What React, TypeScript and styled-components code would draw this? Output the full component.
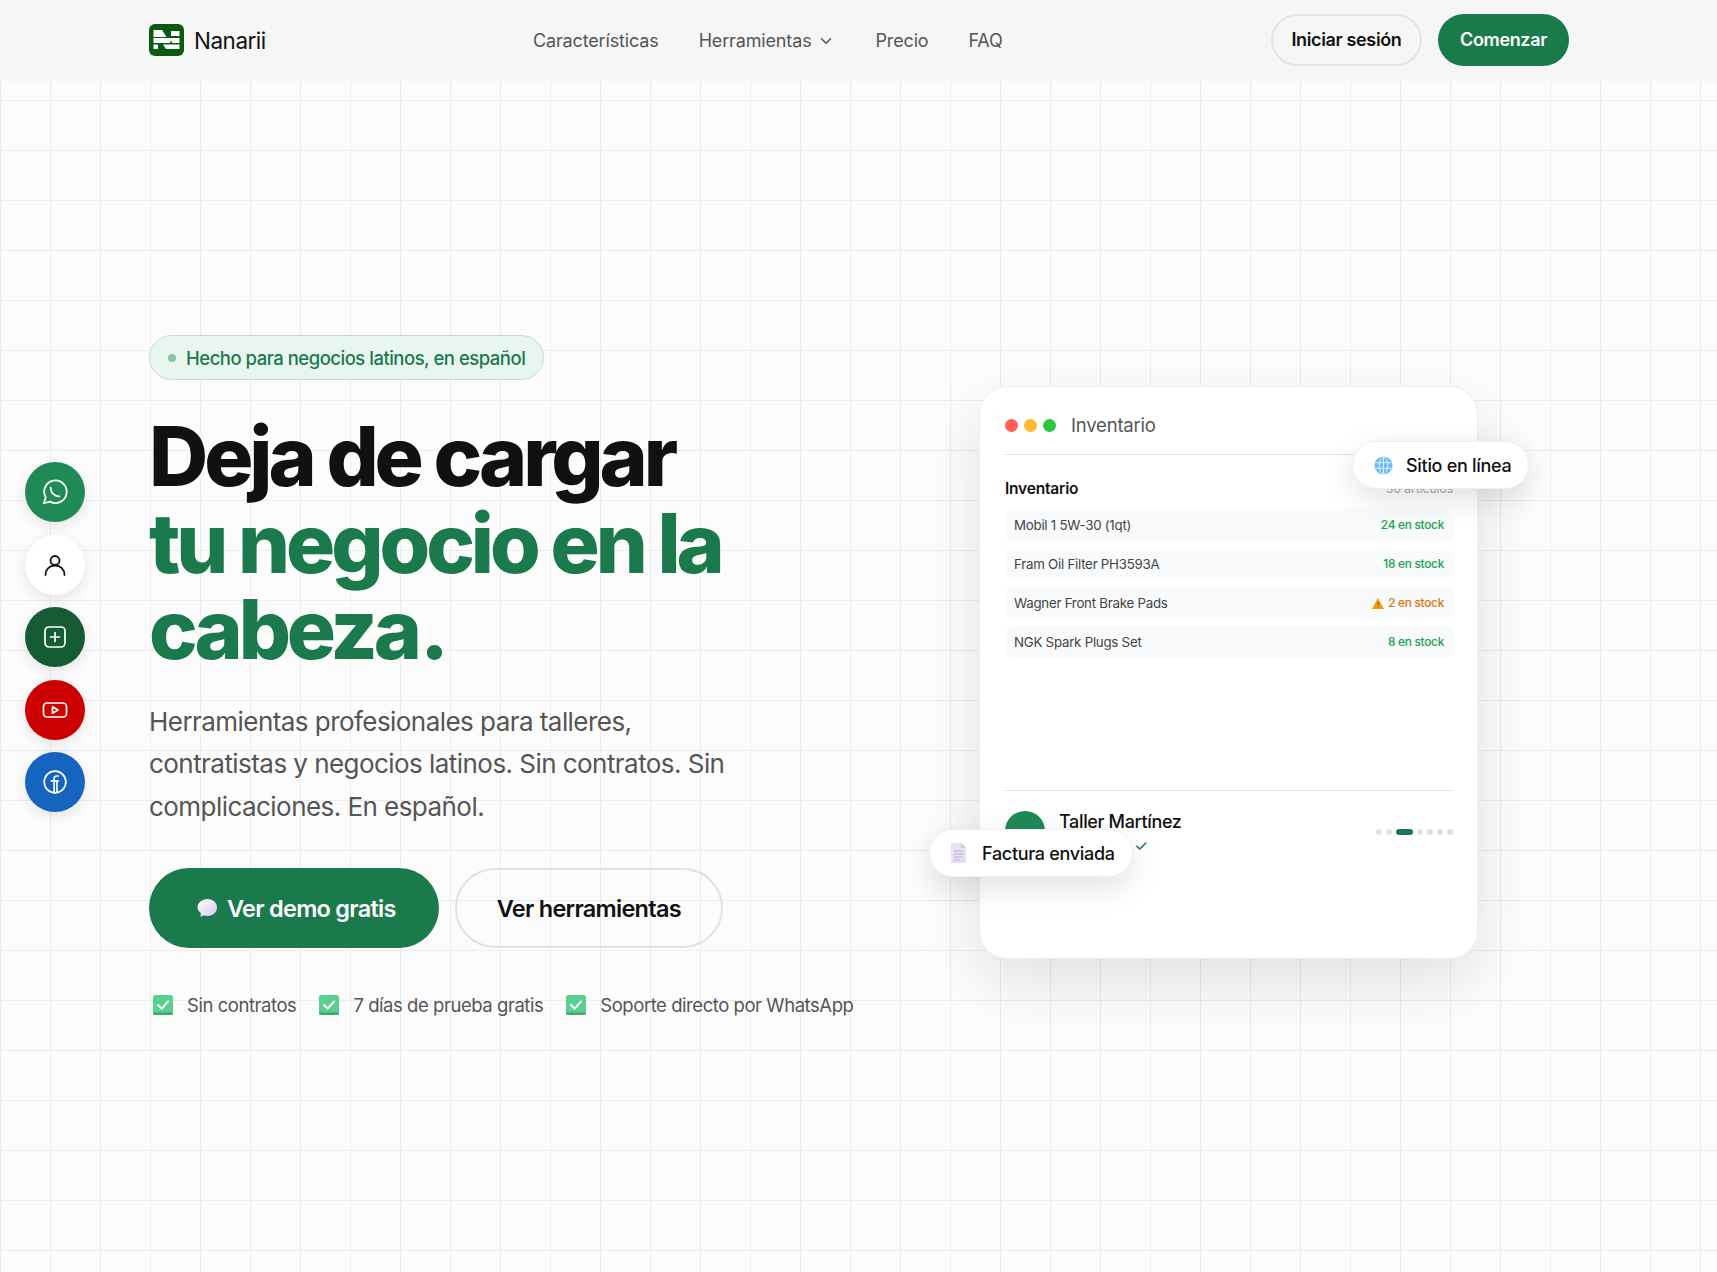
import React from 'react';
import styled, { createGlobalStyle } from 'styled-components';
import { ChevronDown } from 'lucide-react';

const GlobalStyle = createGlobalStyle`
  * { box-sizing: border-box; }
  html, body { margin: 0; padding: 0; }
  body {
    font-family: 'Inter', 'Noto Sans', sans-serif;
    background: #fbfbfb;
    color: #111;
  }
`;

const Page = styled.div`
  position: relative;
  height: 1272px;
  overflow: hidden;
  display: flex;
  flex-direction: column;
  background-color: #fcfcfc;
  background-image:
    linear-gradient(to right, #ececec 1px, transparent 1px),
    linear-gradient(to bottom, #ececec 1px, transparent 1px);
  background-size: 50px 50px;
`;

const Nav = styled.header`
  flex: 0 0 81px;
  display: grid;
  grid-template-columns: 384px auto 1fr;
  align-items: center;
  padding: 0 148px 0 149px;
  background: #f6f6f6;
`;

const Brand = styled.div`
  display: flex;
  align-items: center;
  gap: 10px;
  font-size: 22.5px;
  letter-spacing: -0.5px;
  color: #111;
`;

const LogoSvg = styled.svg`
  display: block;
  margin-bottom: 2px;
`;

const NavLinks = styled.nav`
  display: flex;
  align-items: center;
  gap: 40px;
`;

const NavLink = styled.a`
  display: flex;
  align-items: center;
  gap: 6px;
  font-size: 18px;
  letter-spacing: -0.15px;
  color: #555;
`;

const NavActions = styled.div`
  display: flex;
  justify-content: flex-end;
  gap: 16px;
  margin-bottom: 2px;
`;

const NavButton = styled.button<{ $primary?: boolean }>`
  height: 52px;
  padding: 0 ${(p) => (p.$primary ? '22px' : '18.5px')};
  border-radius: 26px;
  border: ${(p) => (p.$primary ? '0' : '2px solid #e4e4e4')};
  background: ${(p) => (p.$primary ? '#1a7a4c' : 'transparent')};
  color: ${(p) => (p.$primary ? '#fff' : '#111')};
  font-family: inherit;
  font-size: 18px;
  font-weight: 600;
  letter-spacing: -0.35px;
`;

const Hero = styled.main`
  flex: 1;
  display: flex;
  align-items: center;
  justify-content: space-between;
  padding: 0 239px 2px 149px;
`;

const Copy = styled.section`
  display: flex;
  flex-direction: column;
  align-items: flex-start;
`;

const Badge = styled.div`
  display: flex;
  align-items: center;
  gap: 10px;
  height: 45px;
  padding: 0 18px;
  border-radius: 23px;
  border: 1px solid #bfe0cf;
  background: #e9f6ef;
  color: #1a7a4c;
  font-size: 18.5px;
  font-weight: 500;
  letter-spacing: -0.5px;
`;

const BadgeDot = styled.span`
  width: 8px;
  height: 8px;
  border-radius: 50%;
  background: #8cc3a6;
`;

const Title = styled.h1`
  margin: 34px 0 0;
  font-size: 82px;
  line-height: 86.5px;
  font-weight: 800;
  letter-spacing: -4.1px;
  color: #111;
`;

const TitleAccent = styled.span`
  display: block;
  color: #1a7a4c;
`;

const TitleMark = styled.span`
  margin-left: 2px;
`;

const Lead = styled.p`
  margin: 27px 0 0;
  width: 600px;
  font-size: 26px;
  line-height: 42.5px;
  letter-spacing: -0.55px;
  color: #555;
`;

const Actions = styled.div`
  display: flex;
  gap: 16px;
  margin-top: 40px;
`;

const HeroButton = styled.button<{ $primary?: boolean }>`
  display: flex;
  align-items: center;
  gap: 8px;
  height: 80px;
  padding: ${(p) => (p.$primary ? '0 43px 0 46px' : '0 40px')};
  border-radius: 40px;
  border: ${(p) => (p.$primary ? '0' : '2px solid #e2e2e2')};
  background: ${(p) => (p.$primary ? '#1a7a4c' : 'transparent')};
  color: ${(p) => (p.$primary ? '#fff' : '#111')};
  font-family: inherit;
  font-size: 23.5px;
  font-weight: 600;
  letter-spacing: -0.72px;
`;

const Checks = styled.ul`
  display: flex;
  gap: 23px;
  margin: 46px 0 0;
  padding: 0 0 0 4px;
  list-style: none;
`;

const CheckItem = styled.li`
  display: flex;
  align-items: center;
  gap: 14px;
  font-size: 18.5px;
  letter-spacing: -0.45px;
  color: #555;
`;

const Visual = styled.section`
  position: relative;
  flex: 0 0 499px;
  height: 573px;
  margin-top: -6px;
`;

const Card = styled.div`
  height: 100%;
  padding: 24px 24px 24px 25px;
  border-radius: 28px;
  border: 1px solid #eeeeee;
  background: #fff;
  box-shadow: 0 24px 64px rgba(0, 0, 0, 0.11);
`;

const CardTop = styled.div`
  display: flex;
  align-items: center;
  gap: 15px;
  height: 44px;
  padding-bottom: 15px;
  border-bottom: 1px solid #e3e3e3;
`;

const Dots = styled.div`
  display: flex;
  gap: 6px;
`;

const Dot = styled.span<{ $color: string }>`
  width: 13px;
  height: 13px;
  border-radius: 50%;
  background: ${(p) => p.$color};
`;

const CardTitle = styled.div`
  font-size: 18.5px;
  letter-spacing: -0.2px;
  color: #555;
`;

const ListHead = styled.div`
  display: flex;
  align-items: center;
  justify-content: space-between;
  margin-top: 23px;
  height: 20px;
`;

const ListTitle = styled.div`
  font-size: 15.5px;
  font-weight: 600;
  letter-spacing: -0.2px;
  color: #111;
`;

const ListCount = styled.div`
  font-size: 12px;
  color: #aaa;
`;

const Rows = styled.div`
  display: flex;
  flex-direction: column;
  gap: 7px;
  margin-top: 11px;
`;

const Row = styled.div`
  display: flex;
  align-items: center;
  justify-content: space-between;
  height: 32px;
  padding: 0 9px;
  border-radius: 8px;
  background: #f8fafc;
`;

const RowName = styled.span`
  font-size: 13.3px;
  letter-spacing: -0.25px;
  color: #444;
`;

const RowStock = styled.span<{ $low?: boolean }>`
  display: flex;
  align-items: center;
  gap: 4px;
  font-size: 11.8px;
  font-weight: 500;
  letter-spacing: -0.25px;
  color: ${(p) => (p.$low ? '#d97706' : '#16a34a')};
`;

const CardFoot = styled.div`
  display: flex;
  justify-content: space-between;
  margin-top: 132px;
  padding-top: 20px;
  border-top: 1px solid #e3e3e3;
`;

const Shop = styled.div`
  display: flex;
  gap: 14px;
`;

const Avatar = styled.div`
  width: 40px;
  height: 40px;
  border-radius: 50%;
  background: #1f8a55;
`;

const ShopName = styled.div`
  font-size: 18px;
  line-height: 22px;
  font-weight: 500;
  letter-spacing: -0.35px;
  color: #111;
`;

const ShopNote = styled.div`
  margin-top: 3px;
  padding-left: 75px;
  font-size: 16px;
  line-height: 18px;
  color: #1a7a4c;
`;

const Pager = styled.div`
  display: flex;
  align-items: center;
  gap: 4px;
  height: 6px;
  margin-top: 18px;
`;

const PagerDot = styled.span<{ $active?: boolean }>`
  width: ${(p) => (p.$active ? '17px' : '6px')};
  height: 6px;
  border-radius: 3px;
  background: ${(p) => (p.$active ? '#1a7a4c' : '#dfe1e5')};
`;

const FloatPill = styled.div<{ $top: number; $left: number; $gap: number }>`
  position: absolute;
  top: ${(p) => p.$top}px;
  left: ${(p) => p.$left}px;
  display: flex;
  align-items: center;
  gap: ${(p) => p.$gap}px;
  height: 48px;
  padding: 0 17px 0 21px;
  border-radius: 24px;
  border: 1px solid #f0f0f0;
  background: #fff;
  box-shadow: 0 10px 32px rgba(0, 0, 0, 0.12);
  font-size: 18px;
  font-weight: 500;
  letter-spacing: -0.3px;
  white-space: nowrap;
  color: #111;
`;

const Rail = styled.aside`
  position: absolute;
  left: 25px;
  top: 462px;
  display: flex;
  flex-direction: column;
  gap: 12.5px;
`;

const RailButton = styled.div<{ $bg: string; $fg?: string }>`
  display: flex;
  align-items: center;
  justify-content: center;
  width: 60px;
  height: 60px;
  border-radius: 50%;
  background: ${(p) => p.$bg};
  color: ${(p) => p.$fg ?? '#fff'};
  box-shadow: 0 4px 14px rgba(0, 0, 0, 0.1);
`;

const LogoMark = () => (
  <LogoSvg width="35" height="32" viewBox="0 0 35 32">
    <rect width="35" height="32" rx="6" fill="#0c5a12" />
    <path
      fill="#fff"
      d="M4.500 6h8.500l4.500 7H4.500zM22 7h8.500v5H22zM4.500 14h26v5h-7l-.8-1.500h-2l.8 1.500H4.500zM4.500 20.500h4.500V25H4.500zM14 20.500h16.500V25H17z"
    />
  </LogoSvg>
);

const ChatBubble = () => (
  <svg width="24" height="24" viewBox="0 0 24 24">
    <defs>
      <linearGradient id="bubble" x1="0" y1="0" x2="1" y2="1">
        <stop offset="0" stopColor="#ffffff" />
        <stop offset="1" stopColor="#d6c9ea" />
      </linearGradient>
    </defs>
    <path
      fill="url(#bubble)"
      d="M12.500 3c5.500 0 9.500 3.600 9.500 8.500S18 20 12.500 20c-1.400 0-2.700-.2-3.800-.7L5.500 21l.4-3.900C3.700 15.500 2.500 13.600 2.500 11.500 2.500 6.600 7 3 12.500 3z"
    />
  </svg>
);

const GreenCheck = () => (
  <svg width="20" height="20" viewBox="0 0 20 20">
    <rect width="20" height="20" rx="2.500" fill="#5ad08f" />
    <path d="M0 17.500V18a2 2 0 0 0 2 2h16a2 2 0 0 0 2-2v-.5z" fill="#3aa870" />
    <path d="M5 10l3.600 3.600L15 6.500" fill="none" stroke="#fff" strokeWidth="2" strokeLinecap="round" strokeLinejoin="round" />
  </svg>
);

const Globe = () => (
  <svg width="19" height="19" viewBox="0 0 20 20" fill="none" stroke="#e3f3fd" strokeWidth="1">
    <circle cx="10" cy="10" r="9.500" fill="#6dbcf0" stroke="none" />
    <ellipse cx="10" cy="10" rx="4.500" ry="9" />
    <path d="M10 1v18M1.500 7h17M1.500 13h17" />
  </svg>
);

const DocIcon = () => (
  <svg width="15" height="20" viewBox="0 0 15 20" fill="none">
    <path d="M0 0h10l5 5v15H0z" fill="#e8e0f3" />
    <path d="M10 0l5 5h-5z" fill="#d3c6e6" />
    <path d="M3 8h9M3 11h9M3 14h9M3 17h6" stroke="#bdaad6" strokeWidth="1" />
  </svg>
);

const Warning = () => (
  <svg width="12" height="11" viewBox="0 0 12 11">
    <path d="M6 0l6 11H0z" fill="#f59e0b" />
    <path d="M6 4v3.500M6 8.500v1" stroke="#8a4b08" strokeWidth="1" />
  </svg>
);

const WhatsappIcon = () => (
  <svg width="30" height="30" viewBox="0 0 24 24" fill="none" stroke="currentColor" strokeWidth="1.400" strokeLinecap="round" strokeLinejoin="round">
    <path d="M3 21l1.600-4.600A9 9 0 1 1 8 19.700z" />
    <path d="M8.500 8.500c0 4 3 7 7 7" />
  </svg>
);

const UserIcon = () => (
  <svg width="24" height="24" viewBox="0 0 24 24" fill="none" stroke="currentColor" strokeWidth="1.800" strokeLinecap="round">
    <circle cx="12" cy="7.500" r="4.500" />
    <path d="M2.500 22c0-5.500 4-9.500 9.500-9.500s9.500 4 9.500 9.500" />
  </svg>
);

const PlusBoxIcon = () => (
  <svg width="24" height="24" viewBox="0 0 24 24" fill="none" stroke="currentColor" strokeWidth="1.700" strokeLinecap="round">
    <rect x="2" y="2" width="20" height="20" rx="4" />
    <path d="M12 7.500v9M7.500 12h9" />
  </svg>
);

const YoutubeIcon = () => (
  <svg width="26" height="20" viewBox="0 0 26 20" fill="none" stroke="currentColor" strokeWidth="1.700" strokeLinejoin="round">
    <rect x="1.500" y="3" width="23" height="14" rx="3.500" />
    <path d="M10.500 6.800v6.400l5.500-3.200z" />
  </svg>
);

const FacebookIcon = () => (
  <svg width="26" height="26" viewBox="0 0 24 24" fill="none" stroke="currentColor" strokeWidth="1.500" strokeLinecap="round" strokeLinejoin="round">
    <circle cx="12" cy="12" r="10" />
    <path d="M15 6.500h-1.500c-1.400 0-2.300.9-2.300 2.300V22M15 11H8.500M13.800 11v10.500" />
  </svg>
);

const rows = [
  { name: 'Mobil 1 5W-30 (1qt)', stock: '24 en stock' },
  { name: 'Fram Oil Filter PH3593A', stock: '18 en stock' },
  { name: 'Wagner Front Brake Pads', stock: '2 en stock', low: true },
  { name: 'NGK Spark Plugs Set', stock: '8 en stock' },
];

const navItems = ['Características', 'Herramientas', 'Precio', 'FAQ'];
const checks = ['Sin contratos', '7 días de prueba gratis', 'Soporte directo por WhatsApp'];

function App() {
  return (
    <Page>
      <GlobalStyle />
      <Nav>
        <Brand>
          <LogoMark />
          Nanarii
        </Brand>
        <NavLinks>
          {navItems.map((item) => (
            <NavLink key={item}>
              {item}
              {item === 'Herramientas' && <ChevronDown size={18} strokeWidth={2} />}
            </NavLink>
          ))}
        </NavLinks>
        <NavActions>
          <NavButton>Iniciar sesión</NavButton>
          <NavButton $primary>Comenzar</NavButton>
        </NavActions>
      </Nav>

      <Rail>
        <RailButton $bg="#1f8a55"><WhatsappIcon /></RailButton>
        <RailButton $bg="#fff" $fg="#111"><UserIcon /></RailButton>
        <RailButton $bg="#155c35"><PlusBoxIcon /></RailButton>
        <RailButton $bg="#cc0000"><YoutubeIcon /></RailButton>
        <RailButton $bg="#1565c0"><FacebookIcon /></RailButton>
      </Rail>

      <Hero>
        <Copy>
          <Badge>
            <BadgeDot />
            Hecho para negocios latinos, en español
          </Badge>
          <Title>
            Deja de cargar
            <TitleAccent>
              tu negocio en la cabeza<TitleMark>.</TitleMark>
            </TitleAccent>
          </Title>
          <Lead>
            Herramientas profesionales para talleres, contratistas y negocios latinos. Sin
            contratos. Sin complicaciones. En español.
          </Lead>
          <Actions>
            <HeroButton $primary>
              <ChatBubble />
              Ver demo gratis
            </HeroButton>
            <HeroButton>Ver herramientas</HeroButton>
          </Actions>
          <Checks>
            {checks.map((item) => (
              <CheckItem key={item}>
                <GreenCheck />
                {item}
              </CheckItem>
            ))}
          </Checks>
        </Copy>

        <Visual>
          <Card>
            <CardTop>
              <Dots>
                <Dot $color="#ff5f57" />
                <Dot $color="#febc2e" />
                <Dot $color="#28c840" />
              </Dots>
              <CardTitle>Inventario</CardTitle>
            </CardTop>
            <ListHead>
              <ListTitle>Inventario</ListTitle>
              <ListCount>36 artículos</ListCount>
            </ListHead>
            <Rows>
              {rows.map((row) => (
                <Row key={row.name}>
                  <RowName>{row.name}</RowName>
                  <RowStock $low={row.low}>
                    {row.low && <Warning />}
                    {row.stock}
                  </RowStock>
                </Row>
              ))}
            </Rows>
            <CardFoot>
              <Shop>
                <Avatar />
                <div>
                  <ShopName>Taller Martínez</ShopName>
                  <ShopNote>✓</ShopNote>
                </div>
              </Shop>
              <Pager>
                <PagerDot />
                <PagerDot />
                <PagerDot $active />
                <PagerDot />
                <PagerDot />
                <PagerDot />
                <PagerDot />
              </Pager>
            </CardFoot>
          </Card>
          <FloatPill $top={55} $left={373} $gap={13}>
            <Globe />
            Sitio en línea
          </FloatPill>
          <FloatPill $top={443} $left={-50} $gap={16}>
            <DocIcon />
            Factura enviada
          </FloatPill>
        </Visual>
      </Hero>
    </Page>
  );
}

export default App;
